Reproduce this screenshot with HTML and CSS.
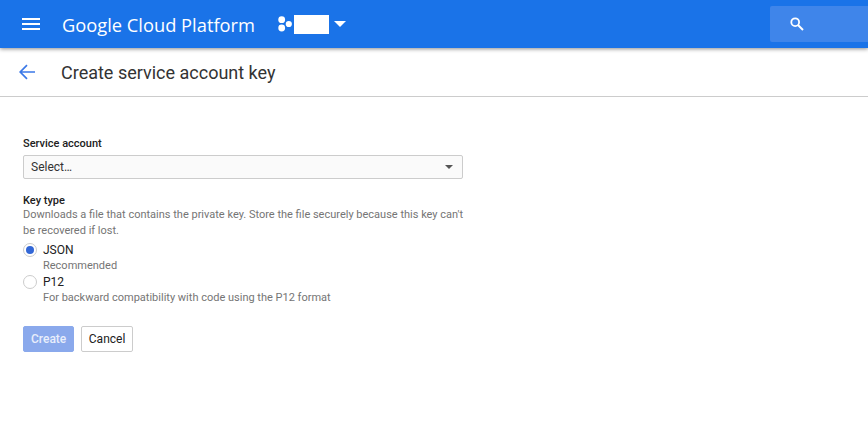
FILE: index.html

```html
<!DOCTYPE html>
<html lang="en">
<head>
    <meta charset="UTF-8">
    <title>Create service account key</title>
    <link rel="stylesheet" href="styles.css">
</head>
<body>
<header class="topbar">
    <button class="menu-btn" aria-label="Menu">
        <svg width="18" height="12" viewBox="0 0 18 12"><path d="M0 0h18v2H0zM0 5h18v2H0zM0 10h18v2H0z" fill="#fff"/></svg>
    </button>
    <div class="brand">Google Cloud Platform</div>
    <div class="project">
        <svg class="project-dots" width="14" height="16" viewBox="0 0 14 16"><circle cx="3.7" cy="3.7" r="3.4" fill="#fff"/><circle cx="3.7" cy="12" r="3.4" fill="#fff"/><circle cx="10.8" cy="8" r="3.1" fill="#fff"/></svg>
        <div class="project-name"></div>
        <svg width="12" height="6" viewBox="0 0 12 6"><path d="M0 0h12L6 6z" fill="#fff"/></svg>
    </div>
    <div class="search">
        <svg width="14" height="14" viewBox="0 0 14 14"><circle cx="5.2" cy="5.2" r="3.9" fill="none" stroke="#fff" stroke-width="1.8"/><path d="M8 8l5 5" stroke="#fff" stroke-width="2"/></svg>
    </div>
</header>
<div class="subbar">
    <svg class="back" width="16" height="16" viewBox="0 0 16 16"><path d="M16 8H1.5M8 1.2L1.2 8 8 14.8" fill="none" stroke="#3b78e7" stroke-width="1.7"/></svg>
    <h1>Create service account key</h1>
</div>
<main class="content">
    <label class="field-label">Service account</label>
    <div class="select">
        <span>Select…</span>
        <i class="select-arrow"></i>
    </div>
    <div class="field-label key-label">Key type</div>
    <p class="hint key-hint">Downloads a file that contains the private key. Store the file securely because this key can't be recovered if lost.</p>
    <div class="radio-group">
        <div class="radio-row">
            <span class="radio checked"></span>
            <div>
                <div class="radio-name">JSON</div>
                <div class="hint">Recommended</div>
            </div>
        </div>
        <div class="radio-row">
            <span class="radio"></span>
            <div>
                <div class="radio-name">P12</div>
                <div class="hint">For backward compatibility with code using the P12 format</div>
            </div>
        </div>
    </div>
    <div class="actions">
        <button class="btn btn-primary">Create</button>
        <button class="btn btn-cancel">Cancel</button>
    </div>
</main>
</body>
</html>
```

FILE: styles.css

```css
body {
    background-color: #fff;
    color: #212121;
    font-family: Roboto, sans-serif;
    font-size: 11px;
    margin: 0;
    padding: 0;
}
.topbar {
    background-color: #1a73e8;
    height: 48px;
    display: flex;
    align-items: center;
    box-shadow: 0 1px 4px rgba(0, 0, 0, 0.45);
    position: relative;
}
.menu-btn {
    background: none;
    border: none;
    padding: 0;
    margin-left: 22px;
    width: 18px;
    height: 12px;
    display: flex;
}
.brand {
    color: #fff;
    font-family: "Open Sans", sans-serif;
    font-size: 18.3px;
    margin-left: 22px;
    width: 193px;
    white-space: nowrap;
}
.project {
    display: flex;
    align-items: center;
    margin-left: 23px;
}
.project-name {
    background-color: #fff;
    width: 35px;
    height: 19px;
    margin-left: 2px;
    margin-right: 5px;
}
.search {
    background-color: #3f85ea;
    border-radius: 2px 0 0 2px;
    height: 36px;
    width: 98px;
    margin-left: auto;
    display: flex;
    align-items: center;
    padding-left: 20px;
    box-sizing: border-box;
}
.subbar {
    height: 48px;
    display: flex;
    align-items: center;
    border-bottom: 1px solid #ccc;
}
.back {
    margin-left: 19px;
}
.subbar h1 {
    font-size: 18px;
    font-weight: 400;
    margin: 0 0 0 26px;
    color: #333;
}
.content {
    padding: 40px 0 0 23px;
    width: 440px;
}
.field-label {
    display: block;
    font-weight: 500;
    line-height: 14px;
    color: #212121;
}
.select {
    border: 1px solid #ccc;
    border-radius: 2px;
    background-color: #fafafa;
    height: 22px;
    margin-top: 4px;
    padding: 0 9px 0 7px;
    display: flex;
    align-items: center;
    justify-content: space-between;
    color: #333;
    font-size: 12px;
}
.select-arrow {
    border-left: 4px solid transparent;
    border-right: 4px solid transparent;
    border-top: 4px solid #555;
}
.key-label {
    margin-top: 15px;
    line-height: 13px;
}
.hint {
    color: #757575;
    line-height: 16px;
    margin: 0;
}
.key-hint {
    margin-right: -8px;
}
.radio-group {
    margin-top: 3px;
}
.radio-row {
    display: flex;
    gap: 6px;
}
.radio {
    width: 12px;
    height: 12px;
    border: 1px solid #ccc;
    border-radius: 50%;
    margin-top: 1px;
    background-color: #fff;
    display: flex;
    align-items: center;
    justify-content: center;
    flex-shrink: 0;
}
.radio.checked::after {
    content: "";
    width: 8px;
    height: 8px;
    border-radius: 50%;
    background-color: #3367d6;
}
.radio-name {
    color: #212121;
    font-size: 12px;
    line-height: 16px;
}
.actions {
    display: flex;
    gap: 7px;
    margin-top: 20px;
}
.btn {
    background-color: #fff;
    border: 1px solid #ccc;
    border-radius: 2px;
    color: #212121;
    font-family: Roboto, sans-serif;
    font-size: 12px;
    height: 26px;
    padding: 0 7px;
}
.btn-cancel {
    padding: 0 6.5px;
}
.btn-primary {
    background-color: #8aa9ec;
    border-color: #8aa9ec;
    color: #e8eefb;
    font-weight: 500;
}
```
